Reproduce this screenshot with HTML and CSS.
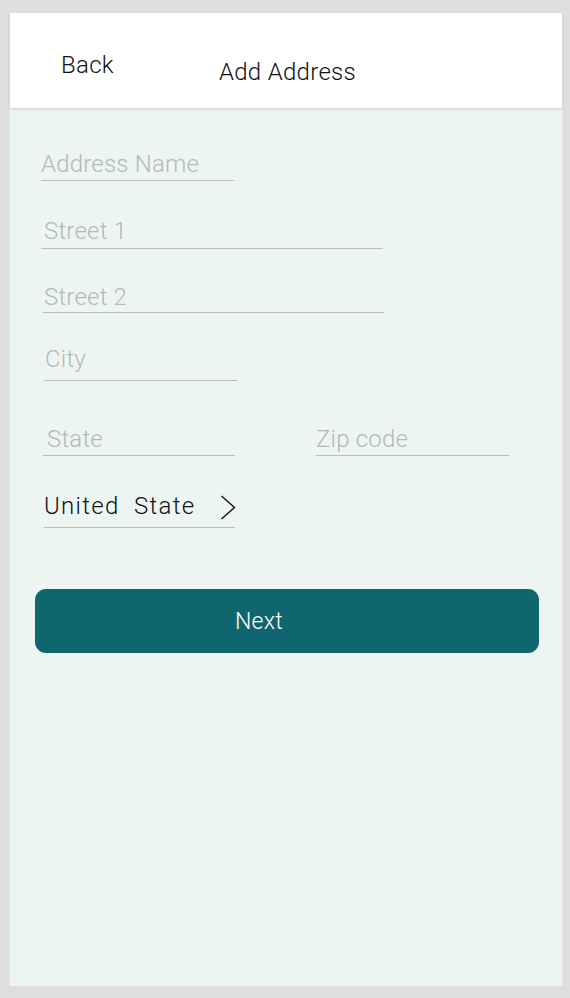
FILE: index.html
```html
<!DOCTYPE html>
<html>
<head>
<meta charset="utf-8">
<link rel="stylesheet" href="styles.css">
</head>
<body>
<div class="phone">
  <header class="topbar">
    <span class="back">Back</span>
    <span class="title">Add Address</span>
  </header>
  <main class="form">
    <div class="field f-name">Address Name</div>
    <div class="field f-street1">Street 1</div>
    <div class="field f-street2">Street 2</div>
    <div class="field f-city">City</div>
    <div class="row">
      <div class="field f-state">State</div>
      <div class="field f-zip">Zip code</div>
    </div>
    <div class="field f-country">
      <span>United&nbsp; State</span>
      <svg class="chev" width="16" height="25" viewBox="0 0 16 25"><polyline points="1.5,1 14.5,12.5 1.5,24" fill="none" stroke="#111" stroke-width="1.4"/></svg>
    </div>
    <button class="next">Next</button>
  </main>
</div>
</body>
</html>
```
FILE: styles.css
```css
html, body { margin: 0; padding: 0; }
body {
  background: #dedede;
  font-family: Roboto, "Noto Sans", sans-serif;
  font-weight: 300;
}
.phone {
  margin: 13px 0 0 10px;
  width: 552px;
  height: 973px;
  background: #edf5f2;
  display: flex;
  flex-direction: column;
  box-shadow: 0 0 0 1px #e4e8e6;
}
.topbar {
  height: 95px;
  background: #fff;
  box-shadow: 0 1px 3px rgba(0,0,0,0.18);
  display: flex;
  align-items: flex-start;
  color: #111;
  font-size: 24px;
  letter-spacing: 0.3px;
  position: relative;
  z-index: 1;
}
.back { margin: 38px 0 0 51px; line-height: 28px; }
.title { margin: 45px 0 0 105px; line-height: 28px; }
.form { display: flex; flex-direction: column; align-items: flex-start; }
.field {
  font-size: 24px;
  line-height: 28px;
  color: #b3bab7;
  letter-spacing: 0.2px;
  border-bottom: 1px solid #b9bebc;
  box-sizing: content-box;
}
.f-name { margin: 42px 0 0 31px; width: 193px; padding-bottom: 2px; }
.f-street1 { margin: 36px 0 0 31px; width: 339px; padding: 0 0 3px 3px; }
.f-street2 { margin: 34px 0 0 33px; width: 340px; padding: 0 0 1px 1px; }
.f-city { margin: 32px 0 0 34px; width: 192px; padding: 0 0 7px 1px; }
.row { display: flex; margin: 44px 0 0 33px; gap: 81px; }
.f-state { width: 188px; padding: 0 0 2px 4px; }
.f-zip { width: 193px; padding: 0 0 2px 0; }
.f-country {
  margin: 36px 0 0 34px;
  width: 191px;
  padding-bottom: 7px;
  color: #111;
  letter-spacing: 1.3px;
  display: flex;
  justify-content: space-between;
  align-items: center;
}
.chev { margin-right: -1px; margin-top: 2px; }
.next {
  margin: 61px 0 0 25px;
  width: 504px;
  height: 64px;
  padding: 0 56px 0 0;
  border: none;
  border-radius: 11px;
  background: #10666f;
  color: #fff;
  font-family: Roboto, "Noto Sans", sans-serif;
  font-weight: 300;
  font-size: 23px;
  letter-spacing: 0.3px;
}
```
